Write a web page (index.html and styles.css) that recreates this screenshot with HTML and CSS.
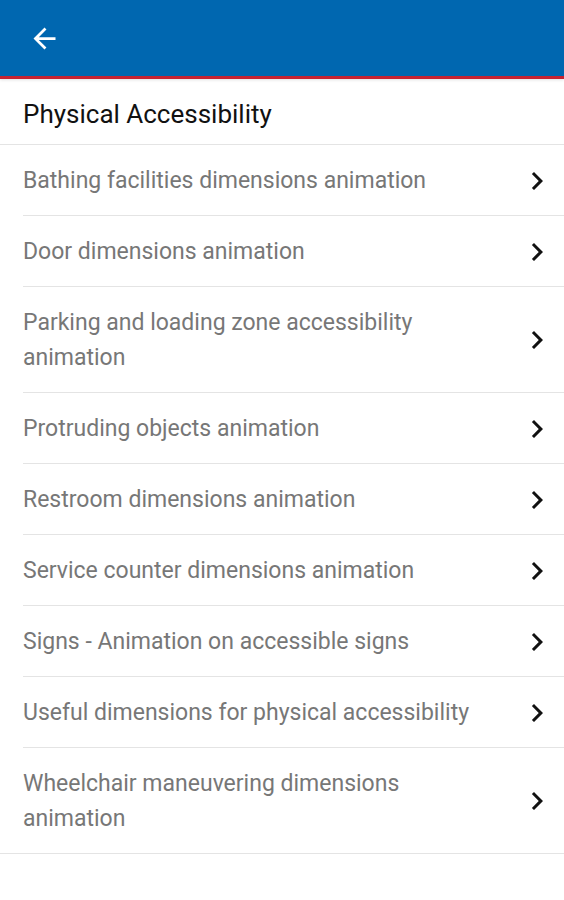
FILE: index.html
```html
<!DOCTYPE html>
<html lang="en">
<head>
  <meta charset="UTF-8" />
  <meta name="viewport" content="width=device-width, initial-scale=1.0"/>
  <title>Physical Accessibility</title>
  <link rel="stylesheet" href="styles.css">
</head>
<body>
  <header class="topbar">
    <button class="back" aria-label="Back">
      <svg width="33" height="33" viewBox="0 0 24 24">
        <path d="M20 11H7.83l5.59-5.59L12 4l-8 8 8 8 1.41-1.41L7.83 13H20v-2z" fill="#fff"/>
      </svg>
    </button>
  </header>

  <h1 class="title">Physical Accessibility</h1>

  <ul class="list">
    <li class="row"><span>Bathing facilities dimensions animation</span><svg class="chev" viewBox="0 0 24 24"><path d="M10 6L8.59 7.41 13.17 12l-4.58 4.59L10 18l6-6z"/></svg></li>
    <li class="row"><span>Door dimensions animation</span><svg class="chev" viewBox="0 0 24 24"><path d="M10 6L8.59 7.41 13.17 12l-4.58 4.59L10 18l6-6z"/></svg></li>
    <li class="row"><span>Parking and loading zone accessibility animation</span><svg class="chev" viewBox="0 0 24 24"><path d="M10 6L8.59 7.41 13.17 12l-4.58 4.59L10 18l6-6z"/></svg></li>
    <li class="row"><span>Protruding objects animation</span><svg class="chev" viewBox="0 0 24 24"><path d="M10 6L8.59 7.41 13.17 12l-4.58 4.59L10 18l6-6z"/></svg></li>
    <li class="row"><span>Restroom dimensions animation</span><svg class="chev" viewBox="0 0 24 24"><path d="M10 6L8.59 7.41 13.17 12l-4.58 4.59L10 18l6-6z"/></svg></li>
    <li class="row"><span>Service counter dimensions animation</span><svg class="chev" viewBox="0 0 24 24"><path d="M10 6L8.59 7.41 13.17 12l-4.58 4.59L10 18l6-6z"/></svg></li>
    <li class="row"><span>Signs - Animation on accessible signs</span><svg class="chev" viewBox="0 0 24 24"><path d="M10 6L8.59 7.41 13.17 12l-4.58 4.59L10 18l6-6z"/></svg></li>
    <li class="row"><span>Useful dimensions for physical accessibility</span><svg class="chev" viewBox="0 0 24 24"><path d="M10 6L8.59 7.41 13.17 12l-4.58 4.59L10 18l6-6z"/></svg></li>
    <li class="row"><span>Wheelchair maneuvering dimensions animation</span><svg class="chev" viewBox="0 0 24 24"><path d="M10 6L8.59 7.41 13.17 12l-4.58 4.59L10 18l6-6z"/></svg></li>
  </ul>
</body>
</html>
```

FILE: styles.css
```css
:root {
  --blue: #0067b0;
  --red: #c62232;
  --line: #e4e4e4;
  --text: #777;
}

* {
  box-sizing: border-box;
  font-family: Roboto, "Noto Sans", sans-serif;
}

body {
  margin: 0;
  background: #fff;
}

.topbar {
  height: 79px;
  background: var(--blue);
  border-bottom: 3px solid var(--red);
  display: flex;
  align-items: center;
  padding-left: 28px;
  box-shadow: 0 1px 3px rgba(0,0,0,0.12);
}

.back {
  background: none;
  border: none;
  padding: 0;
  display: flex;
  cursor: pointer;
}

.title {
  margin: 0;
  height: 66px;
  padding: 5px 23px 0;
  display: flex;
  align-items: center;
  font-size: 26px;
  font-weight: 400;
  color: #111;
  border-bottom: 1px solid var(--line);
}

.list {
  list-style: none;
  margin: 0;
  padding: 0;
  border-bottom: 1px solid var(--line);
}

.row {
  margin-left: 23px;
  padding: 18px 9px 17px 0;
  min-height: 71px;
  display: flex;
  align-items: center;
  gap: 16px;
  font-size: 23px;
  line-height: 35px;
  color: var(--text);
  border-bottom: 1px solid var(--line);
}

.row:last-child {
  border-bottom: none;
}

.row span {
  flex: 1;
}

.chev {
  flex: none;
  width: 36px;
  height: 36px;
  margin: -1px 0;
  fill: #111;
}
```
